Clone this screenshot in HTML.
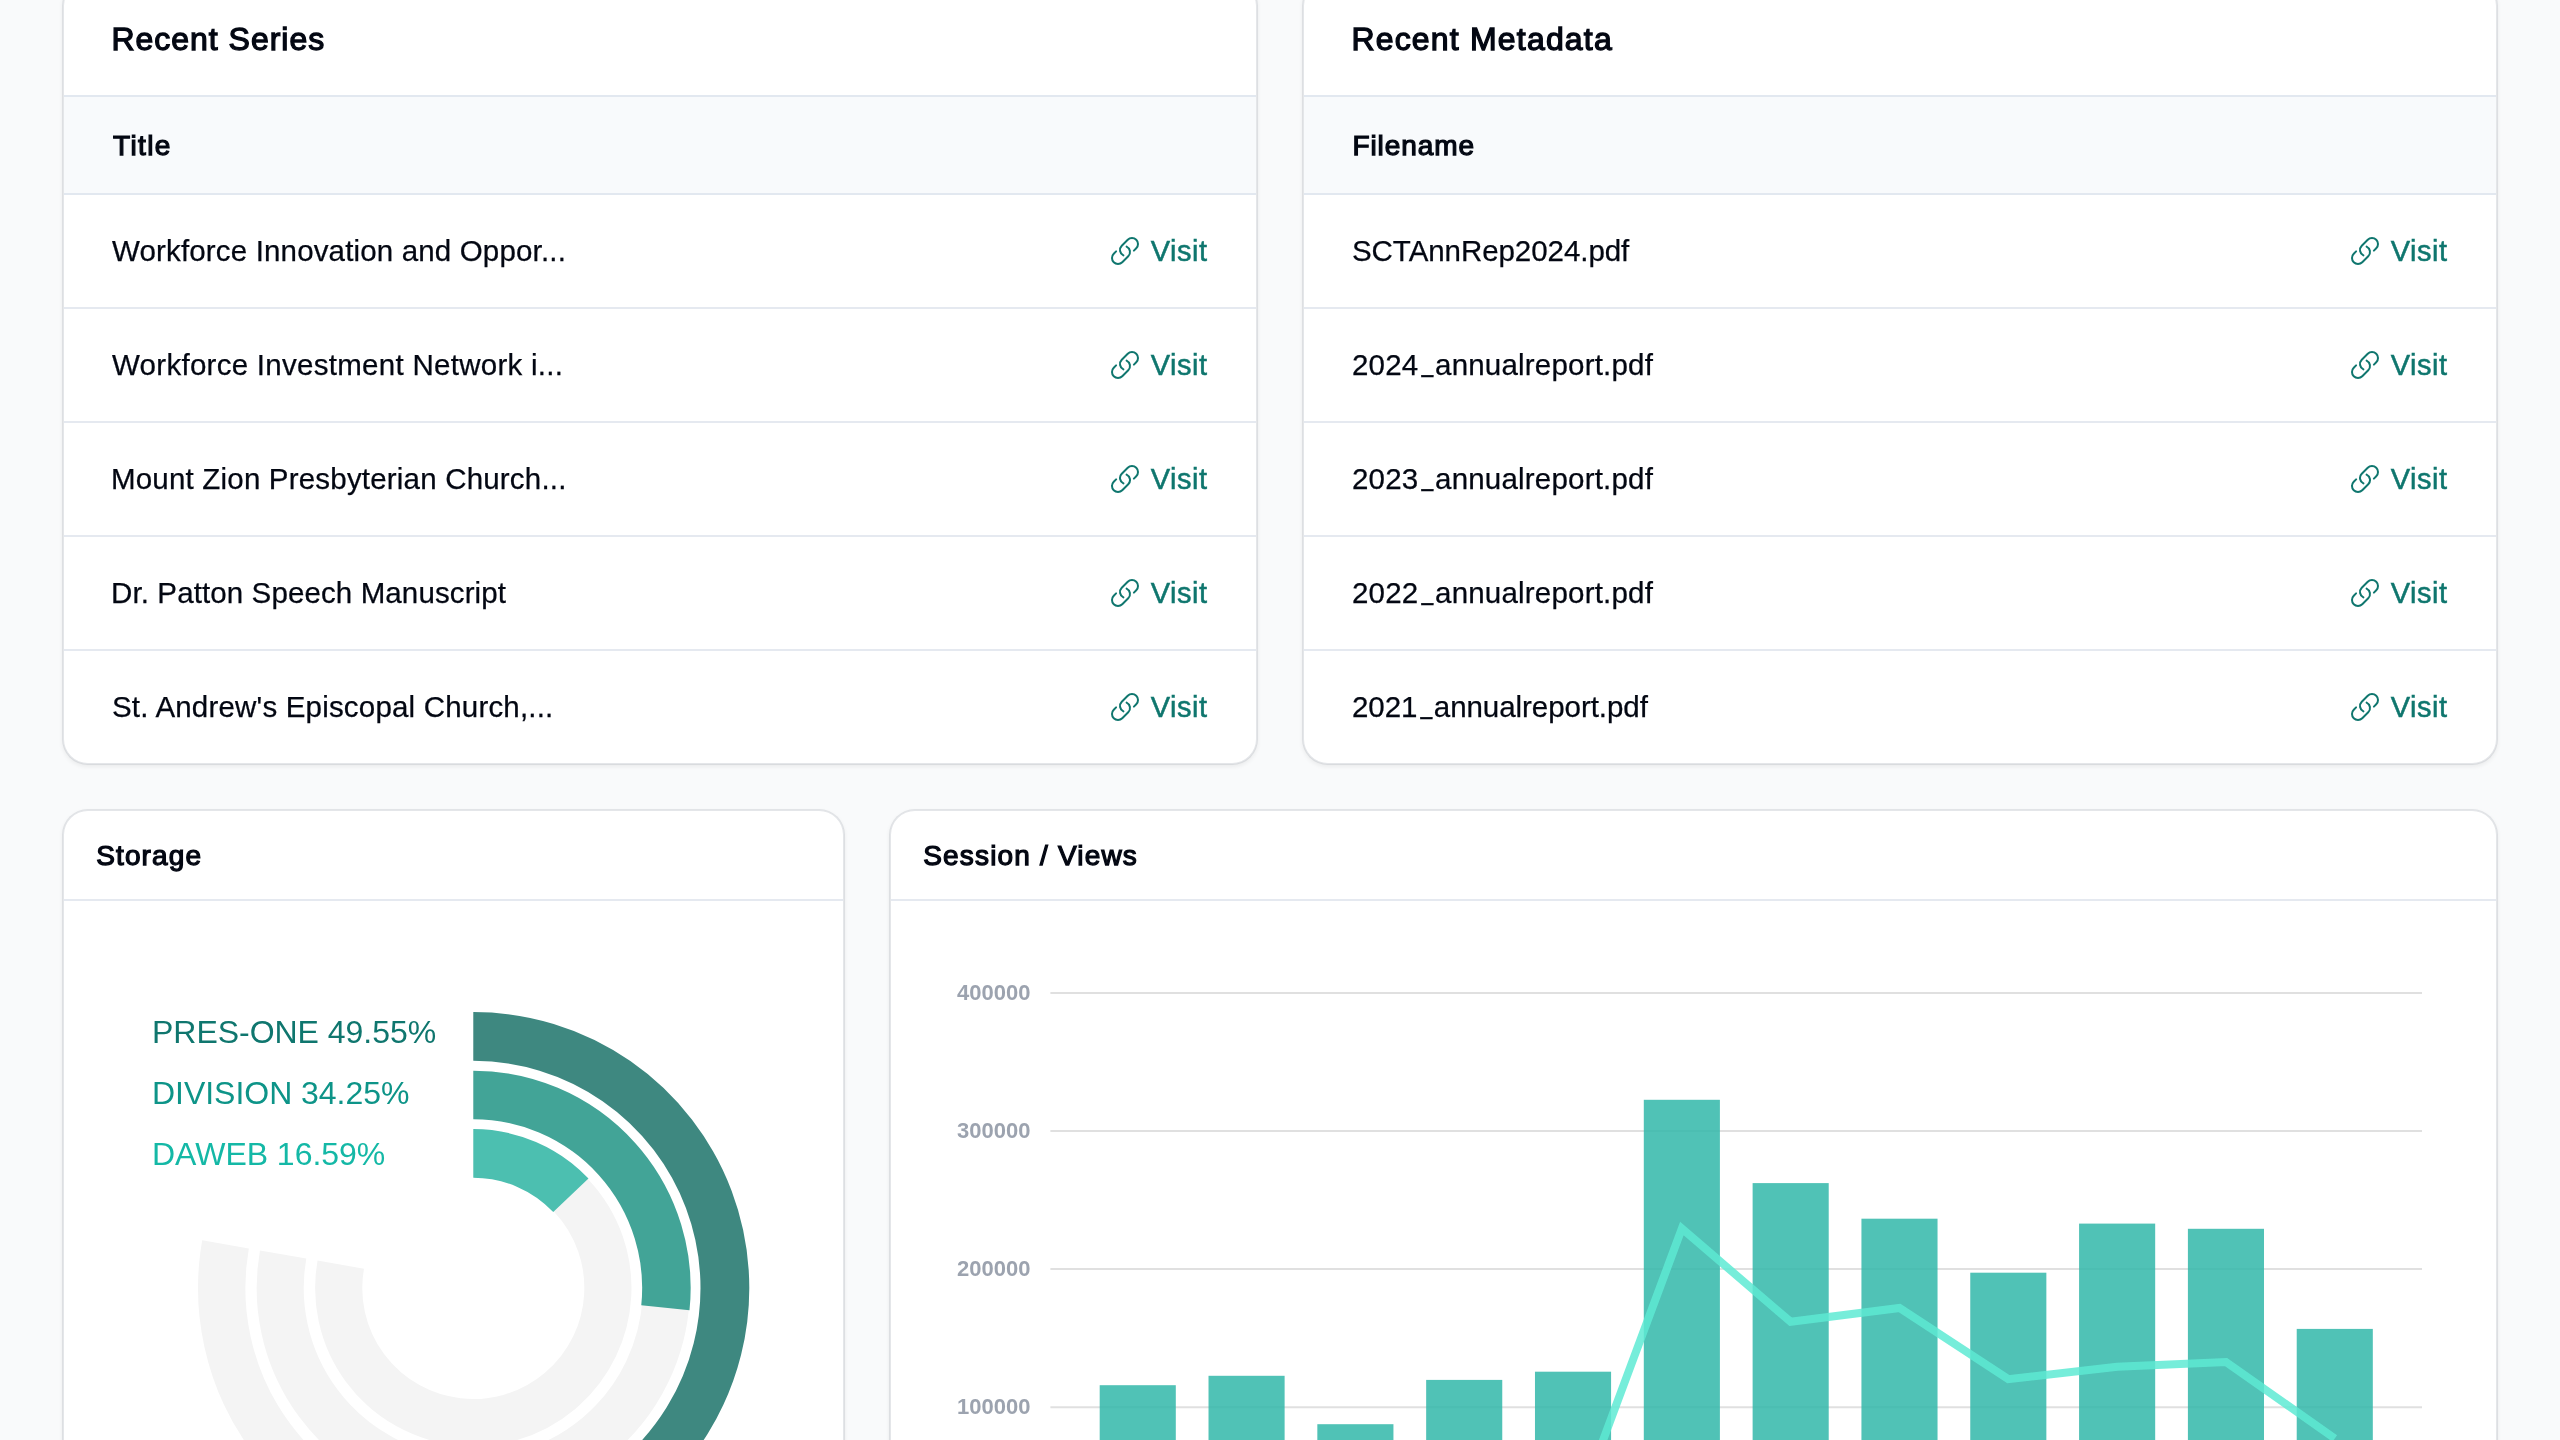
<!DOCTYPE html>
<html lang="en">
<head>
<meta charset="utf-8">
<title>Dashboard</title>
<style>
*{box-sizing:border-box;margin:0;padding:0}
html,body{width:2560px;height:1440px;overflow:hidden}
body{background:#f9fafb;font-family:"Liberation Sans",sans-serif;color:#030712;position:relative}
.card{position:absolute;background:#fff;border:2px solid rgba(15,23,42,.085);background-clip:padding-box;border-radius:26px;box-shadow:0 2px 4px rgba(0,0,0,.06);overflow:hidden;will-change:transform}
.c1{left:62px;top:-20px;width:1196px;height:785px}
.c2{left:1302px;top:-20px;width:1196px;height:785px}
.c3{left:62px;top:809px;width:782.7px;height:700px}
.c4{left:888.7px;top:809px;width:1609.3px;height:700px}
.hd{height:115px;border-bottom:2px solid #e2e8f0;position:relative}
.hd h2{position:absolute;left:47.4px;top:39px;font-size:32px;line-height:36px;font-weight:400;-webkit-text-stroke:1.3px #030712;white-space:nowrap}
.th{height:98px;background:#f8fafc;border-bottom:2px solid #e2e8f0;position:relative}
.th span{position:absolute;left:49px;top:32.5px;font-size:28px;line-height:32px;font-weight:400;-webkit-text-stroke:1.25px #030712;white-space:nowrap}
.row{height:114px;border-bottom:2px solid #e5e9f0;position:relative}
.row:last-child{border-bottom:0}
.row .t{position:absolute;left:48px;top:40.3px;font-size:29.5px;line-height:32px;white-space:nowrap;-webkit-text-stroke:.25px #030712}
.row .v{position:absolute;right:48.5px;top:40.3px;font-size:29px;line-height:32px;color:#0f766e;white-space:nowrap;-webkit-text-stroke:.5px #0f766e}
.row svg{position:absolute;right:115px;top:40px;width:32px;height:32px}
.u{display:inline-block;font-style:normal;transform:translate(1.2px,-3.9px) scaleX(.72)}
.hd2{height:90px;border-bottom:2px solid #e5e9f0;position:relative}
.hd2 h3{position:absolute;left:32.2px;top:28.9px;font-size:28px;line-height:32px;font-weight:400;-webkit-text-stroke:1.25px #030712;white-space:nowrap}
#page{position:absolute;left:0;top:0;width:2560px;height:1440px;overflow:hidden}
#charts{will-change:transform;position:absolute;left:0;top:0;width:2560px;height:1440px;font-family:"Liberation Sans",sans-serif}
</style>
</head>
<body>
<div id="page">
<div class="card c1">
  <div class="hd"><h2 id="h1" style="letter-spacing:0.987px">Recent Series</h2></div>
  <div class="th"><span id="th1" style="letter-spacing:1.38px">Title</span></div>
  <div class="row"><span class="t" id="s0" style="letter-spacing:0.158px">Workforce Innovation and Oppor...</span><svg viewBox="0 0 24 24" fill="none" stroke="#0f766e" stroke-width="1.5" stroke-linecap="round" stroke-linejoin="round"><path d="M13.19 8.688a4.5 4.5 0 0 1 1.242 7.244l-4.5 4.5a4.5 4.5 0 0 1-6.364-6.364l1.757-1.757m13.35-.622 1.757-1.757a4.5 4.5 0 0 0-6.364-6.364l-4.5 4.5a4.5 4.5 0 0 0 1.242 7.244"/></svg><span class="v" style="letter-spacing:0.5px">Visit</span></div>
  <div class="row"><span class="t" id="s1" style="letter-spacing:0.279px">Workforce Investment Network i...</span><svg viewBox="0 0 24 24" fill="none" stroke="#0f766e" stroke-width="1.5" stroke-linecap="round" stroke-linejoin="round"><path d="M13.19 8.688a4.5 4.5 0 0 1 1.242 7.244l-4.5 4.5a4.5 4.5 0 0 1-6.364-6.364l1.757-1.757m13.35-.622 1.757-1.757a4.5 4.5 0 0 0-6.364-6.364l-4.5 4.5a4.5 4.5 0 0 0 1.242 7.244"/></svg><span class="v" style="letter-spacing:0.5px">Visit</span></div>
  <div class="row"><span class="t" id="s2" style="letter-spacing:0.191px;margin-left:-1px">Mount Zion Presbyterian Church...</span><svg viewBox="0 0 24 24" fill="none" stroke="#0f766e" stroke-width="1.5" stroke-linecap="round" stroke-linejoin="round"><path d="M13.19 8.688a4.5 4.5 0 0 1 1.242 7.244l-4.5 4.5a4.5 4.5 0 0 1-6.364-6.364l1.757-1.757m13.35-.622 1.757-1.757a4.5 4.5 0 0 0-6.364-6.364l-4.5 4.5a4.5 4.5 0 0 0 1.242 7.244"/></svg><span class="v" style="letter-spacing:0.5px">Visit</span></div>
  <div class="row"><span class="t" id="s3" style="letter-spacing:0.113px;margin-left:-1px">Dr. Patton Speech Manuscript</span><svg viewBox="0 0 24 24" fill="none" stroke="#0f766e" stroke-width="1.5" stroke-linecap="round" stroke-linejoin="round"><path d="M13.19 8.688a4.5 4.5 0 0 1 1.242 7.244l-4.5 4.5a4.5 4.5 0 0 1-6.364-6.364l1.757-1.757m13.35-.622 1.757-1.757a4.5 4.5 0 0 0-6.364-6.364l-4.5 4.5a4.5 4.5 0 0 0 1.242 7.244"/></svg><span class="v" style="letter-spacing:0.5px">Visit</span></div>
  <div class="row"><span class="t" id="s4" style="letter-spacing:0.19px">St. Andrew's Episcopal Church,...</span><svg viewBox="0 0 24 24" fill="none" stroke="#0f766e" stroke-width="1.5" stroke-linecap="round" stroke-linejoin="round"><path d="M13.19 8.688a4.5 4.5 0 0 1 1.242 7.244l-4.5 4.5a4.5 4.5 0 0 1-6.364-6.364l1.757-1.757m13.35-.622 1.757-1.757a4.5 4.5 0 0 0-6.364-6.364l-4.5 4.5a4.5 4.5 0 0 0 1.242 7.244"/></svg><span class="v" style="letter-spacing:0.5px">Visit</span></div>
</div>
<div class="card c2">
  <div class="hd"><h2 id="h2" style="letter-spacing:1.188px">Recent Metadata</h2></div>
  <div class="th"><span id="th2" style="letter-spacing:0.929px;margin-left:-.6px">Filename</span></div>
  <div class="row"><span class="t" id="m0" style="letter-spacing:-0.061px">SCTAnnRep2024.pdf</span><svg viewBox="0 0 24 24" fill="none" stroke="#0f766e" stroke-width="1.5" stroke-linecap="round" stroke-linejoin="round"><path d="M13.19 8.688a4.5 4.5 0 0 1 1.242 7.244l-4.5 4.5a4.5 4.5 0 0 1-6.364-6.364l1.757-1.757m13.35-.622 1.757-1.757a4.5 4.5 0 0 0-6.364-6.364l-4.5 4.5a4.5 4.5 0 0 0 1.242 7.244"/></svg><span class="v" style="letter-spacing:0.5px">Visit</span></div>
  <div class="row"><span class="t" id="m1" style="letter-spacing:0.2px">2024<i class="u">_</i>annualreport.pdf</span><svg viewBox="0 0 24 24" fill="none" stroke="#0f766e" stroke-width="1.5" stroke-linecap="round" stroke-linejoin="round"><path d="M13.19 8.688a4.5 4.5 0 0 1 1.242 7.244l-4.5 4.5a4.5 4.5 0 0 1-6.364-6.364l1.757-1.757m13.35-.622 1.757-1.757a4.5 4.5 0 0 0-6.364-6.364l-4.5 4.5a4.5 4.5 0 0 0 1.242 7.244"/></svg><span class="v" style="letter-spacing:0.5px">Visit</span></div>
  <div class="row"><span class="t" id="m2" style="letter-spacing:0.2px">2023<i class="u">_</i>annualreport.pdf</span><svg viewBox="0 0 24 24" fill="none" stroke="#0f766e" stroke-width="1.5" stroke-linecap="round" stroke-linejoin="round"><path d="M13.19 8.688a4.5 4.5 0 0 1 1.242 7.244l-4.5 4.5a4.5 4.5 0 0 1-6.364-6.364l1.757-1.757m13.35-.622 1.757-1.757a4.5 4.5 0 0 0-6.364-6.364l-4.5 4.5a4.5 4.5 0 0 0 1.242 7.244"/></svg><span class="v" style="letter-spacing:0.5px">Visit</span></div>
  <div class="row"><span class="t" id="m3" style="letter-spacing:0.2px">2022<i class="u">_</i>annualreport.pdf</span><svg viewBox="0 0 24 24" fill="none" stroke="#0f766e" stroke-width="1.5" stroke-linecap="round" stroke-linejoin="round"><path d="M13.19 8.688a4.5 4.5 0 0 1 1.242 7.244l-4.5 4.5a4.5 4.5 0 0 1-6.364-6.364l1.757-1.757m13.35-.622 1.757-1.757a4.5 4.5 0 0 0-6.364-6.364l-4.5 4.5a4.5 4.5 0 0 0 1.242 7.244"/></svg><span class="v" style="letter-spacing:0.5px">Visit</span></div>
  <div class="row"><span class="t" id="m4" style="letter-spacing:-0.05px">2021<i class="u">_</i>annualreport.pdf</span><svg viewBox="0 0 24 24" fill="none" stroke="#0f766e" stroke-width="1.5" stroke-linecap="round" stroke-linejoin="round"><path d="M13.19 8.688a4.5 4.5 0 0 1 1.242 7.244l-4.5 4.5a4.5 4.5 0 0 1-6.364-6.364l1.757-1.757m13.35-.622 1.757-1.757a4.5 4.5 0 0 0-6.364-6.364l-4.5 4.5a4.5 4.5 0 0 0 1.242 7.244"/></svg><span class="v" style="letter-spacing:0.5px">Visit</span></div>
</div>
<div class="card c3">
  <div class="hd2"><h3 id="h3" style="letter-spacing:1.13px">Storage</h3></div>
</div>
<div class="card c4">
  <div class="hd2"><h3 id="h4" style="letter-spacing:1.175px">Session / Views</h3></div>
</div>
<svg id="charts" viewBox="0 0 2560 1440">
<g id="radial">
<path d="M473.30 1036.40A251.60 251.60 0 1 1 225.52 1244.31" fill="none" stroke="#f4f4f4" stroke-width="47.34"/>
<path d="M473.30 1094.90A193.10 193.10 0 1 1 283.13 1254.47" fill="none" stroke="#f4f4f4" stroke-width="47.05"/>
<path d="M473.30 1153.40A134.60 134.60 0 1 1 340.74 1264.63" fill="none" stroke="#f4f4f4" stroke-width="47.14"/>
<path d="M473.30 1036.40A251.60 251.60 0 0 1 639.22 1477.13" fill="none" stroke="#3e8880" stroke-width="48.8"/>
<path d="M473.30 1094.90A193.10 193.10 0 0 1 665.38 1307.85" fill="none" stroke="#42a497" stroke-width="48.5"/>
<path d="M473.30 1153.40A134.60 134.60 0 0 1 570.86 1195.27" fill="none" stroke="#4cbfb0" stroke-width="48.6"/>
<text x="152" y="1042.5" font-size="32" fill="#0f766e" id="rl0" letter-spacing="-0.03">PRES-ONE 49.55%</text>
<text x="152" y="1103.5" font-size="32" fill="#0d9488" id="rl1" letter-spacing="-0.03">DIVISION 34.25%</text>
<text x="152" y="1164.5" font-size="32" fill="#14b8a6" id="rl2" letter-spacing="-0.03">DAWEB 16.59%</text>
</g>
<g id="bars">
<line x1="1050.4" x2="2422" y1="992.90" y2="992.90" stroke="#e0e0e0" stroke-width="2"/>
<text x="1030.5" y="999.50" font-size="22" font-weight="700" fill="#9ca3af" text-anchor="end">400000</text>
<line x1="1050.4" x2="2422" y1="1131.00" y2="1131.00" stroke="#e0e0e0" stroke-width="2"/>
<text x="1030.5" y="1137.60" font-size="22" font-weight="700" fill="#9ca3af" text-anchor="end">300000</text>
<line x1="1050.4" x2="2422" y1="1269.10" y2="1269.10" stroke="#e0e0e0" stroke-width="2"/>
<text x="1030.5" y="1275.70" font-size="22" font-weight="700" fill="#9ca3af" text-anchor="end">200000</text>
<line x1="1050.4" x2="2422" y1="1407.20" y2="1407.20" stroke="#e0e0e0" stroke-width="2"/>
<text x="1030.5" y="1413.80" font-size="22" font-weight="700" fill="#9ca3af" text-anchor="end">100000</text>
<rect x="1099.70" y="1385.2" width="76.1" height="114.8" fill="#31b7a9" fill-opacity="0.85"/>
<rect x="1208.52" y="1375.8" width="76.1" height="124.2" fill="#31b7a9" fill-opacity="0.85"/>
<rect x="1317.34" y="1424.2" width="76.1" height="75.8" fill="#31b7a9" fill-opacity="0.85"/>
<rect x="1426.16" y="1379.9" width="76.1" height="120.1" fill="#31b7a9" fill-opacity="0.85"/>
<rect x="1534.98" y="1371.7" width="76.1" height="128.3" fill="#31b7a9" fill-opacity="0.85"/>
<rect x="1643.80" y="1099.8" width="76.1" height="400.2" fill="#31b7a9" fill-opacity="0.85"/>
<rect x="1752.62" y="1183.1" width="76.1" height="316.9" fill="#31b7a9" fill-opacity="0.85"/>
<rect x="1861.44" y="1218.7" width="76.1" height="281.3" fill="#31b7a9" fill-opacity="0.85"/>
<rect x="1970.26" y="1272.7" width="76.1" height="227.3" fill="#31b7a9" fill-opacity="0.85"/>
<rect x="2079.08" y="1223.6" width="76.1" height="276.4" fill="#31b7a9" fill-opacity="0.85"/>
<rect x="2187.90" y="1228.8" width="76.1" height="271.2" fill="#31b7a9" fill-opacity="0.85"/>
<rect x="2296.72" y="1328.9" width="76.1" height="171.1" fill="#31b7a9" fill-opacity="0.85"/>
<polyline points="1573.03,1521 1681.85,1228.5 1790.67,1321.8 1899.49,1308 2008.31,1379.2 2117.13,1366.8 2225.95,1362 2334.77,1438.4" fill="none" stroke="#5eead4" stroke-opacity="0.85" stroke-width="8" stroke-linejoin="miter"/>
</g>
</svg>
</div>
</body>
</html>
